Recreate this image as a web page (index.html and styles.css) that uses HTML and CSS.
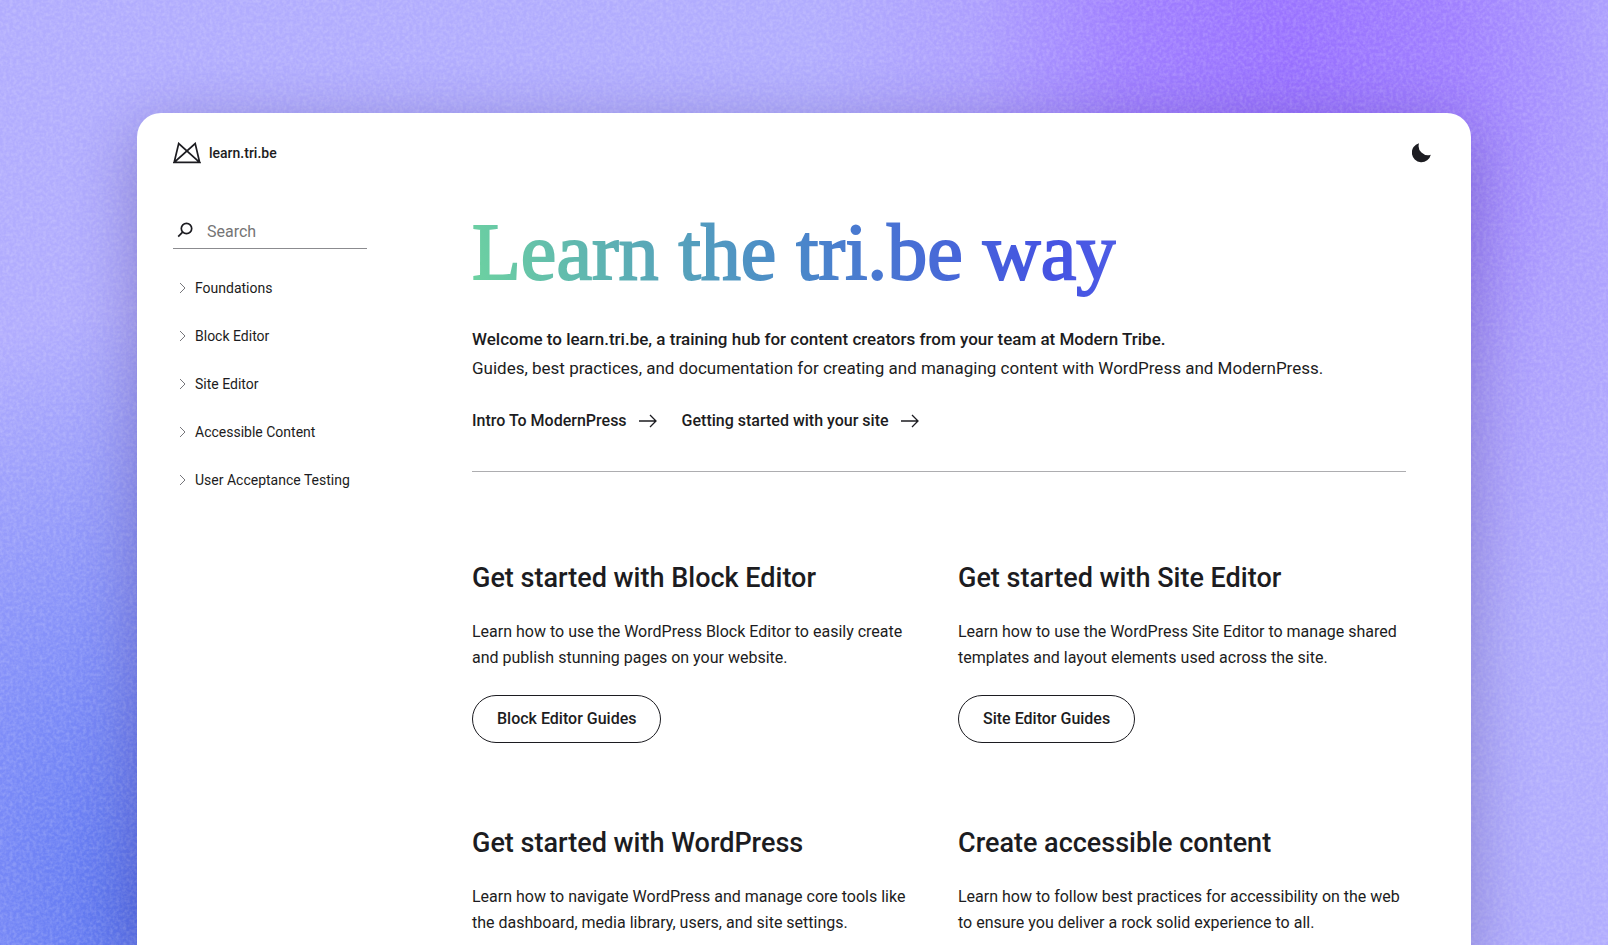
FILE: index.html
```html
<!DOCTYPE html>
<html lang="en">
<head>
<meta charset="utf-8">
<meta name="viewport" content="width=device-width, initial-scale=1">
<title>learn.tri.be</title>
<link rel="stylesheet" href="styles.css">
</head>
<body>
<svg class="grain" aria-hidden="true">
  <filter id="grain-noise" x="0" y="0" width="100%" height="100%" color-interpolation-filters="sRGB">
    <feTurbulence type="fractalNoise" baseFrequency="0.3" numOctaves="2" seed="4"/>
    <feColorMatrix values="0 0 0 0 1  0 0 0 0 1  0 0 0 0 1  0.35 0 0 0 -0.12"/>
  </filter>
  <rect width="100%" height="100%" filter="url(#grain-noise)"/>
</svg>
<div class="card">
  <header class="topbar">
    <a class="brand" href="#">
      <svg class="brand-mark" viewBox="0 0 28 22" aria-hidden="true"><path d="M1.2 20.3 5.7 1.5 26.6 20.3H1.2L22.2 1.5l4.4 18.8"/></svg>
      <span>learn.tri.be</span>
    </a>
    <button class="theme" type="button" aria-label="Dark mode">
      <svg viewBox="0 0 20 20" aria-hidden="true"><path d="M7 .3A9.600 9.600 0 1 0 18.800 11.700 9.300 9.300 0 0 1 7 .3z"/></svg>
    </button>
  </header>
  <div class="body">
    <aside class="sidebar">
      <form class="search" role="search">
        <label for="q" aria-label="Search"><svg viewBox="0 0 16 16" aria-hidden="true"><circle cx="9.500" cy="6.500" r="5.200"/><path d="M5.600 10.200 1.200 14.600"/></svg></label>
        <input id="q" type="search" placeholder="Search">
      </form>
      <nav class="nav" aria-label="Guides">
        <a href="#"><svg viewBox="0 0 8 12" aria-hidden="true"><path d="m1 1 5 5-5 5"/></svg>Foundations</a>
        <a href="#"><svg viewBox="0 0 8 12" aria-hidden="true"><path d="m1 1 5 5-5 5"/></svg>Block Editor</a>
        <a href="#"><svg viewBox="0 0 8 12" aria-hidden="true"><path d="m1 1 5 5-5 5"/></svg>Site Editor</a>
        <a href="#"><svg viewBox="0 0 8 12" aria-hidden="true"><path d="m1 1 5 5-5 5"/></svg>Accessible Content</a>
        <a href="#"><svg viewBox="0 0 8 12" aria-hidden="true"><path d="m1 1 5 5-5 5"/></svg>User Acceptance Testing</a>
      </nav>
    </aside>
    <main class="content">
      <section class="hero">
        <h1>Learn the tri.be way</h1>
        <p class="intro"><strong>Welcome to learn.tri.be, a training hub for content creators from your team at Modern Tribe.</strong><br>Guides, best practices, and documentation for creating and managing content with WordPress and ModernPress.</p>
        <div class="links">
          <a href="#">Intro To ModernPress <svg viewBox="0 0 18 14" aria-hidden="true"><path d="M0 7h17M11 1l6 6-6 6"/></svg></a>
          <a href="#">Getting started with your site <svg viewBox="0 0 18 14" aria-hidden="true"><path d="M0 7h17M11 1l6 6-6 6"/></svg></a>
        </div>
      </section>
      <div class="guides">
        <section class="guide">
          <h2>Get started with Block Editor</h2>
          <p>Learn how to use the WordPress Block Editor to easily create and publish stunning pages on your website.</p>
          <a class="pill" href="#">Block Editor Guides</a>
        </section>
        <section class="guide">
          <h2>Get started with Site Editor</h2>
          <p>Learn how to use the WordPress Site Editor to manage shared templates and layout elements used across the site.</p>
          <a class="pill" href="#">Site Editor Guides</a>
        </section>
        <section class="guide">
          <h2>Get started with WordPress</h2>
          <p>Learn how to navigate WordPress and manage core tools like the dashboard, media library, users, and site settings.</p>
        </section>
        <section class="guide">
          <h2>Create accessible content</h2>
          <p>Learn how to follow best practices for accessibility on the web to ensure you deliver a rock solid experience to all.</p>
        </section>
      </div>
    </main>
  </div>
</div>
</body>
</html>
```
FILE: styles.css
```css
* { box-sizing: border-box; }

body {
  margin: 0;
  height: 100vh;
  overflow: hidden;
  position: relative;
  isolation: isolate;
  padding: 113px 137px 0;
  font-family: Roboto, "Liberation Sans", sans-serif;
  font-size: 16px;
  line-height: 26px;
  color: #1c1c21;
  background:
    radial-gradient(ellipse 480px 640px at 1290px 60px, #9870ff 0%, #9b74ffcc 35%, #a488ff66 65%, #a898ff00 100%),
    radial-gradient(ellipse 420px 600px at 130px 910px, #5c76f0 0%, #6a80f6bb 40%, #7f8cf800 100%),
    #b1acfe;
}

.grain {
  position: absolute;
  inset: 0;
  z-index: -1;
  width: 100%;
  height: 100%;
}

.card {
  min-height: 100%;
  padding: 24px 36px;
  border-radius: 24px 24px 0 0;
  background: #fff;
  box-shadow: 0 16px 64px #281e6e55;
}

a { color: inherit; text-decoration: none; }
svg { fill: none; stroke: currentColor; flex: none; }

.topbar {
  display: flex;
  justify-content: space-between;
  align-items: center;
  height: 32px;
}
.brand {
  display: flex;
  align-items: center;
  gap: 8px;
  font-size: 14px;
  font-weight: 500;
}
.brand-mark { width: 28px; height: 22px; stroke-width: 1.7; }
.theme {
  display: flex;
  padding: 0 3px;
  border: 0;
  background: none;
  color: inherit;
}
.theme svg { width: 20px; height: 20px; fill: currentColor; stroke: none; }

.body {
  display: grid;
  grid-template-columns: 194px minmax(0, 1fr);
  gap: 105px;
  padding: 44px 29px 0 0;
}

.search {
  display: flex;
  align-items: center;
  gap: 14px;
  height: 36px;
  padding: 0 0 2px 4px;
  border-bottom: 1px solid #8b8b8f;
}
.search label { display: flex; }
.search svg { width: 16px; height: 16px; stroke-width: 1.7; }
.search input {
  min-width: 0;
  flex: 1;
  padding: 4px 0 0;
  border: 0;
  outline: 0;
  background: none;
  font: inherit;
}
.search input::placeholder { color: #757575; }

.nav {
  display: grid;
  gap: 24px;
  padding: 27px 0 0 6px;
  font-size: 14px;
  line-height: 24px;
}
.nav a { display: flex; align-items: center; gap: 8px; white-space: nowrap; }
.nav svg { width: 8px; height: 12px; stroke: #77777c; }

.hero {
  padding-bottom: 37px;
  border-bottom: 1px solid #adadb0;
}
h1 {
  width: fit-content;
  margin: 0;
  padding-bottom: 12px;
  font-family: "Liberation Serif", serif;
  font-size: 80px;
  font-weight: 400;
  line-height: 78px;
  white-space: nowrap;
  color: transparent;
  -webkit-text-stroke: 2px transparent;
  background: linear-gradient(75deg, #6dd3a0 0%, #4b8bc8 48%, #4553e2 88%, #4f5ee6 100%);
  -webkit-background-clip: text;
  background-clip: text;
}
.intro {
  margin: 22px 0 25px;
  font-size: 17px;
  line-height: 29px;
}
.intro strong { font-weight: 500; }
.links { display: flex; gap: 25px; font-weight: 500; }
.links a { display: flex; align-items: center; gap: 12px; }
.links svg { width: 18px; height: 14px; stroke-width: 1.3; }

.guides {
  display: grid;
  grid-template-columns: 1fr 1fr;
  gap: 81px 38px;
  padding-top: 87px;
}
h2 {
  margin: 0 0 22px;
  font-size: 27px;
  font-weight: 500;
  line-height: 38px;
}
.guide p { margin: 0; }
.pill {
  display: inline-flex;
  align-items: center;
  height: 48px;
  margin-top: 24px;
  padding: 0 24px;
  border: 1px solid #1c1c21;
  border-radius: 24px;
  font-weight: 500;
}
```
